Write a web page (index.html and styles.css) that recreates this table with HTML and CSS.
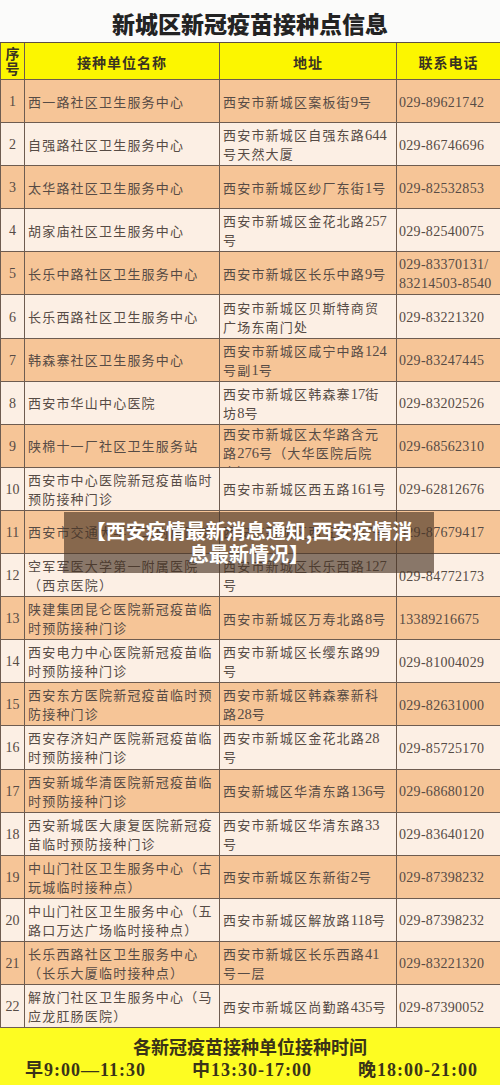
FILE: index.html
```html
<!DOCTYPE html>
<html lang="zh-CN">
<head>
<meta charset="utf-8">
<title>新城区新冠疫苗接种点信息</title>
<link rel="stylesheet" href="styles.css">
</head>
<body>
<div class="page">
  <div class="title">新城区新冠疫苗接种点信息</div>
  <div class="grid">
    <div class="row head">
      <div class="c n">序<br>号</div>
      <div class="c hc">接种单位名称</div>
      <div class="c hc">地址</div>
      <div class="c hc">联系电话</div>
    </div>
    <div class="row o"><div class="c n">1</div><div class="c t">西一路社区卫生服务中心</div><div class="c t">西安市新城区案板街<span class="d">9</span>号</div><div class="c p">029-89621742</div></div>
    <div class="row l"><div class="c n">2</div><div class="c t">自强路社区卫生服务中心</div><div class="c t">西安市新城区自强东路<span class="d">644</span><br>号天然大厦</div><div class="c p">029-86746696</div></div>
    <div class="row o"><div class="c n">3</div><div class="c t">太华路社区卫生服务中心</div><div class="c t">西安市新城区纱厂东街<span class="d">1</span>号</div><div class="c p">029-82532853</div></div>
    <div class="row l"><div class="c n">4</div><div class="c t">胡家庙社区卫生服务中心</div><div class="c t">西安市新城区金花北路<span class="d">257</span><br>号</div><div class="c p">029-82540075</div></div>
    <div class="row o"><div class="c n">5</div><div class="c t">长乐中路社区卫生服务中心</div><div class="c t">西安市新城区长乐中路<span class="d">9</span>号</div><div class="c p">029-83370131/<br>83214503-8540</div></div>
    <div class="row l"><div class="c n">6</div><div class="c t">长乐西路社区卫生服务中心</div><div class="c t">西安市新城区贝斯特商贸<br>广场东南门处</div><div class="c p">029-83221320</div></div>
    <div class="row o"><div class="c n">7</div><div class="c t">韩森寨社区卫生服务中心</div><div class="c t">西安市新城区咸宁中路<span class="d">124</span><br>号副<span class="d">1</span>号</div><div class="c p">029-83247445</div></div>
    <div class="row l"><div class="c n">8</div><div class="c t">西安市华山中心医院</div><div class="c t">西安市新城区韩森寨<span class="d">17</span>街<br>坊<span class="d">8</span>号</div><div class="c p">029-83202526</div></div>
    <div class="row o"><div class="c n">9</div><div class="c t">陕棉十一厂社区卫生服务站</div><div class="c t top">西安市新城区太华路含元<br>路<span class="d">276</span>号（大华医院后院<br>内）</div><div class="c p">029-68562310</div></div>
    <div class="row l"><div class="c n">10</div><div class="c t">西安市中心医院新冠疫苗临时<br>预防接种门诊</div><div class="c t">西安市新城区西五路<span class="d">161</span>号</div><div class="c p">029-62812676</div></div>
    <div class="row o"><div class="c n">11</div><div class="c t">西安市交通大学第二附属医院</div><div class="c t">西安市新城区西五路<span class="d">157</span>号</div><div class="c p">029-87679417</div></div>
    <div class="row l"><div class="c n">12</div><div class="c t">空军军医大学第一附属医院<br>（西京医院）</div><div class="c t">西安市新城区长乐西路<span class="d">127</span><br>号</div><div class="c p">029-84772173</div></div>
    <div class="row o"><div class="c n">13</div><div class="c t">陕建集团昆仑医院新冠疫苗临<br>时预防接种门诊</div><div class="c t">西安市新城区万寿北路<span class="d">8</span>号</div><div class="c p">13389216675</div></div>
    <div class="row l"><div class="c n">14</div><div class="c t">西安电力中心医院新冠疫苗临<br>时预防接种门诊</div><div class="c t">西安市新城区长缨东路<span class="d">99</span><br>号</div><div class="c p">029-81004029</div></div>
    <div class="row o"><div class="c n">15</div><div class="c t">西安东方医院新冠疫苗临时预<br>防接种门诊</div><div class="c t">西安市新城区韩森寨新科<br>路<span class="d">28</span>号</div><div class="c p">029-82631000</div></div>
    <div class="row l"><div class="c n">16</div><div class="c t">西安存济妇产医院新冠疫苗临<br>时预防接种门诊</div><div class="c t">西安市新城区金花北路<span class="d">28</span><br>号</div><div class="c p">029-85725170</div></div>
    <div class="row o"><div class="c n">17</div><div class="c t">西安新城华清医院新冠疫苗临<br>时预防接种门诊</div><div class="c t">西安新城区华清东路<span class="d">136</span>号</div><div class="c p">029-68680120</div></div>
    <div class="row l"><div class="c n">18</div><div class="c t">西安新城医大康复医院新冠疫<br>苗临时预防接种门诊</div><div class="c t">西安市新城区华清东路<span class="d">33</span><br>号</div><div class="c p">029-83640120</div></div>
    <div class="row o"><div class="c n">19</div><div class="c t">中山门社区卫生服务中心（古<br>玩城临时接种点）</div><div class="c t">西安市新城区东新街<span class="d">2</span>号</div><div class="c p">029-87398232</div></div>
    <div class="row l"><div class="c n">20</div><div class="c t">中山门社区卫生服务中心（五<br>路口万达广场临时接种点）</div><div class="c t">西安市新城区解放路<span class="d">118</span>号</div><div class="c p">029-87398232</div></div>
    <div class="row o"><div class="c n">21</div><div class="c t">长乐西路社区卫生服务中心<br>（长乐大厦临时接种点）</div><div class="c t">西安市新城区长乐西路<span class="d">41</span><br>号一层</div><div class="c p">029-83221320</div></div>
    <div class="row l"><div class="c n">22</div><div class="c t">解放门社区卫生服务中心（马<br>应龙肛肠医院）</div><div class="c t">西安市新城区尚勤路<span class="d">435</span>号</div><div class="c p">029-87390052</div></div>
  </div>
  <div class="footer">
    <div class="f1">各新冠疫苗接种单位接种时间</div>
    <div class="f2"><span>早9:00—11:30</span><span>中13:30-17:00</span><span>晚18:00-21:00</span></div>
  </div>
  <div class="caption">【西安疫情最新消息通知,西安疫情消<br>息最新情况】</div>
</div>
</body>
</html>
```

FILE: styles.css
```css
html, body {
  margin: 0;
  padding: 0;
  background: #ffffff;
}

.page {
  position: relative;
  width: 500px;
  height: 1085px;
  overflow: hidden;
  font-family: "Liberation Serif", "Noto Sans CJK SC", serif;
}

.title {
  height: 42px;
  background: #fbfbfa;
  display: flex;
  align-items: center;
  justify-content: center;
  padding-top: 3px;
  box-sizing: border-box;
  font-family: "Noto Sans CJK SC", sans-serif;
  font-weight: 900;
  font-size: 23px;
  color: #232323;
}

.grid {
  display: grid;
  grid-template-columns: 23px 194px 176px 1fr;
  grid-template-rows: 36px;
  grid-auto-rows: 42.1px;
  gap: 1px;
  padding-left: 1px;
  background: #6e5c50;
  border-top: 1px solid #5e4e42;
  border-bottom: 1px solid #6e5c50;
}

.row {
  display: contents;
}

.c {
  display: flex;
  flex-direction: column;
  justify-content: center;
  overflow: hidden;
  color: #564b45;
}

.head .c {
  background: #fcf600;
  color: #3a3322;
  font-family: "Noto Sans CJK SC", sans-serif;
  font-weight: 700;
}

.head .n {
  font-size: 14px;
  line-height: 15px;
  text-align: center;
  display: block;
  padding-top: 3px;
}

.hc {
  align-items: center;
  font-size: 14px;
  letter-spacing: 1px;
  padding-top: 1px;
}

.o .c {
  background: #f6c597;
}

.l .c {
  background: #fcefe4;
}

.n {
  align-items: center;
  font-size: 14px;
  padding-top: 2px;
}

.t {
  display: block;
  align-content: center;
  font-size: 13px;
  letter-spacing: 1.2px;
  line-height: 19px;
  padding-left: 3px;
  padding-top: 2px;
  box-sizing: border-box;
}

.t.top {
  align-content: start;
  padding-top: 0;
}

.d {
  font-size: 14.5px;
  letter-spacing: 0;
}

.p {
  font-size: 14px;
  letter-spacing: 0.3px;
  line-height: 19px;
  padding-left: 2px;
  padding-top: 2px;
}

.footer {
  height: 57px;
  background: #fdfc22;
  display: flex;
  flex-direction: column;
  font-family: "Liberation Serif", "Noto Sans CJK SC", serif;
  font-weight: 700;
  color: #3a3318;
}

.f1 {
  text-align: center;
  font-size: 18px;
  line-height: 22px;
  padding-top: 9px;
}

.f2 {
  display: flex;
  justify-content: space-between;
  font-size: 18px;
  line-height: 22px;
  letter-spacing: 1px;
  padding: 0 22px 0 25px;
}

.caption {
  position: absolute;
  left: 64px;
  top: 512px;
  width: 370px;
  height: 61px;
  box-sizing: border-box;
  padding-top: 7px;
  background: rgba(72, 52, 36, 0.64);
  color: #ffffff;
  font-family: "Noto Sans CJK SC", sans-serif;
  font-weight: 700;
  font-size: 20px;
  line-height: 23px;
  text-align: center;
}
```
